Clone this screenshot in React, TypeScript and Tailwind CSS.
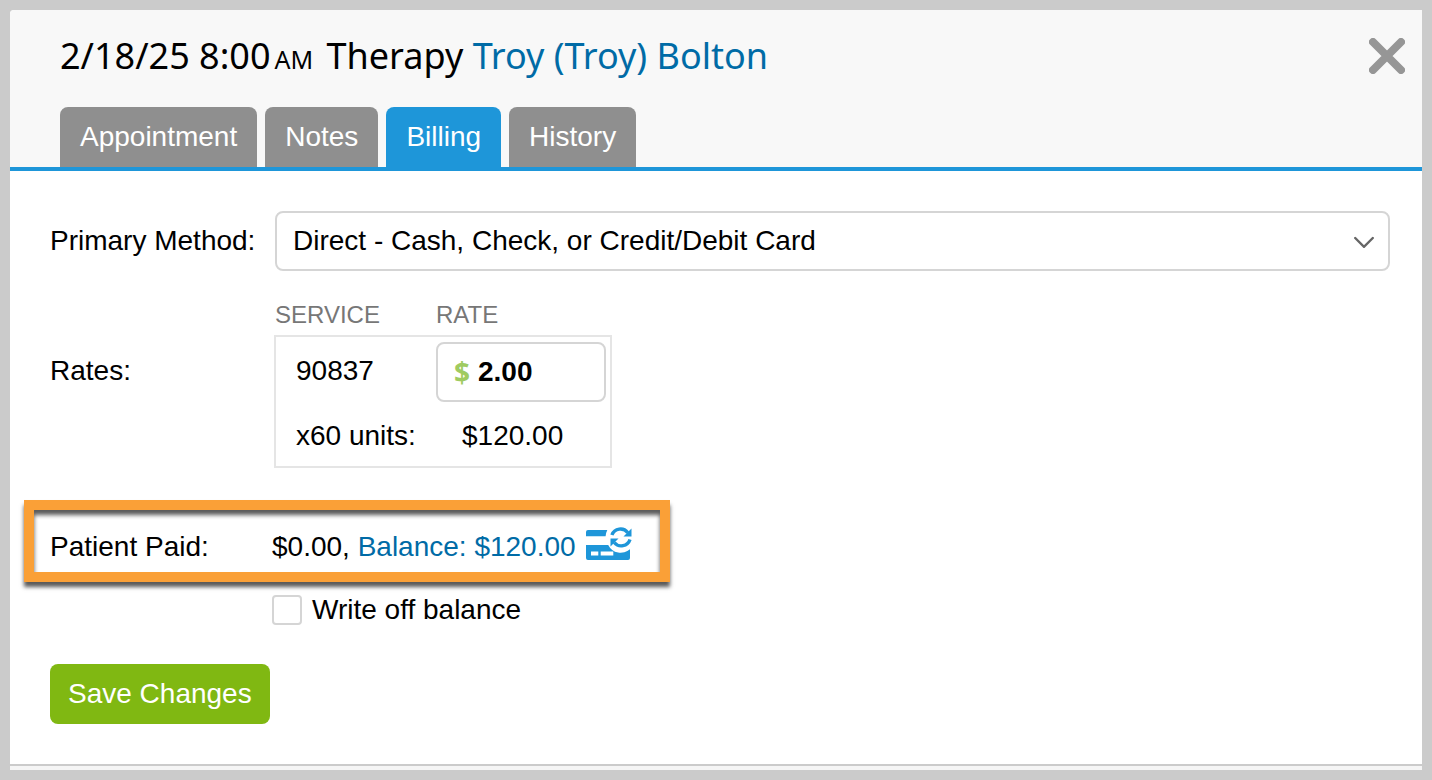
import { useState } from "react";

const TABS = ["Appointment", "Notes", "Billing", "History"];

const TAB_STYLES = "h-[60px] rounded-t-lg px-5 text-white";
const LINK_STYLES = "text-[#006ba6]";
const BORDER_STYLES = "border-2 border-[#d5d5d5]";

const CloseIcon = () => (
  <svg viewBox="0 0 36 36" className="size-9" aria-hidden="true">
    <path
      d="M4 4L32 32M32 4L4 32"
      stroke="#969696"
      strokeWidth="8"
      strokeLinecap="round"
    />
  </svg>
);

const ChevronIcon = () => (
  <svg
    viewBox="0 0 20 12"
    className="pointer-events-none absolute top-[25px] right-4 h-3 w-5"
    aria-hidden="true"
  >
    <path
      d="M1.2 2L10 10.8L18.8 2"
      fill="none"
      stroke="#666666"
      strokeWidth="2.400"
      strokeLinecap="round"
    />
  </svg>
);

const CardRefreshIcon = () => (
  <svg viewBox="0 0 48 36" className="h-9 w-12" aria-hidden="true">
    <g fill="#1e96d9">
      <path d="M3 4H22.3Q20.8 7 20.6 10.3H1V6Q1 4 3 4Z" />
      <path d="M1 19H23.2A14 14 0 0 0 45 23.300V32Q45 34 43 34H3Q1 34 1 32Z" />
      <path d="M46.500 2.500V10.500H38.500Z" />
      <path d="M25.500 20.500V12.500H33.500Z" />
    </g>
    <path d="M6 25.500H13.300V29.500H6ZM15.700 25.500H28.300V29.500H15.700Z" fill="#fff" />
    <path
      d="M26.900 9A9.200 9.200 0 0 1 42.800 6.700M45 13.500A9.200 9.200 0 0 1 29.200 16.500"
      fill="none"
      stroke="#1e96d9"
      strokeWidth="3.400"
    />
  </svg>
);

const App = () => {
  const [activeTab, setActiveTab] = useState("Billing");
  const [rate, setRate] = useState("2.00");

  return (
    <div className="min-h-screen bg-[#cbcbcb] p-2.5 font-['Liberation_Sans',Arial,sans-serif] text-[28px] leading-8 text-black">
      <div className="overflow-hidden rounded-tl-sm bg-white">
        <header className="border-b-4 border-[#1e96d9] bg-[#f8f8f8] pr-[17px] pl-[50px]">
          <div className="flex items-start justify-between pt-5">
            <h1 className="font-['Noto_Sans','Open_Sans',sans-serif] text-[36px] leading-[52px]">
              2/18/25 8:00
              <span className="mx-1 text-[25px] leading-none">AM</span> Therapy{" "}
              <a href="#patient" className={LINK_STYLES}>
                Troy (Troy) Bolton
              </a>
            </h1>
            <button type="button" aria-label="Close" className="mt-2">
              <CloseIcon />
            </button>
          </div>
          <nav className="mt-[25px] flex gap-2">
            {TABS.map((tab) => (
              <button
                key={tab}
                type="button"
                onClick={() => setActiveTab(tab)}
                className={`${TAB_STYLES} ${
                  tab === activeTab ? "bg-[#1e96d9]" : "bg-[#8f8f8f]"
                }`}
              >
                {tab}
              </button>
            ))}
          </nav>
        </header>

        <form className="px-10 pt-10 pr-8 pb-10">
          <div className="flex items-center">
            <label htmlFor="method" className="w-[225px] shrink-0">
              Primary Method:
            </label>
            <div className="relative grow">
              <select
                id="method"
                className={`h-[60px] w-full appearance-none rounded-lg bg-white px-4 ${BORDER_STYLES}`}
              >
                <option>Direct - Cash, Check, or Credit/Debit Card</option>
              </select>
              <ChevronIcon />
            </div>
          </div>

          <div className="mt-7 flex">
            <div className="mt-14 w-[224px] shrink-0">Rates:</div>
            <table className="border-collapse text-left">
              <thead>
                <tr className="text-2xl leading-8 text-[#777777] uppercase">
                  <th className="w-[161px] pb-1 font-normal">Service</th>
                  <th className="pb-1 font-normal">Rate</th>
                </tr>
              </thead>
              <tbody className="border-2 border-[#e5e5e5]">
                <tr>
                  <td className="pl-5">90837</td>
                  <td className="pt-[5px] pr-1 pb-[3px]">
                    <label
                      className={`flex h-[60px] w-[170px] items-center rounded-lg px-4 font-bold ${BORDER_STYLES}`}
                    >
                      <span className="mr-2 font-['Open_Sans',sans-serif] text-[#9fcb61]">
                        $
                      </span>
                      <input
                        type="text"
                        aria-label="Rate"
                        value={rate}
                        onChange={(e) => setRate(e.target.value)}
                        className="w-full min-w-0 outline-none"
                      />
                    </label>
                  </td>
                </tr>
                <tr>
                  <td className="h-[62px] pl-5">x60 units:</td>
                  <td className="pl-[26px]">$120.00</td>
                </tr>
              </tbody>
            </table>
          </div>

          <div className="mt-8 -ml-[26px] flex h-[82px] w-[646px] items-center border-10 border-[#faa037] pt-3 pl-4 shadow-[0px_5px_4px_rgba(0,0,0,0.65),inset_0px_5px_4px_rgba(0,0,0,0.65)]">
            <div className="w-[222px]">Patient Paid:</div>
            <div>
              $0.00,{" "}
              <a href="#balance" className={LINK_STYLES}>
                Balance: $120.00
              </a>
            </div>
            <button
              type="button"
              aria-label="Charge card"
              className="ml-[9px] pb-1.5"
            >
              <CardRefreshIcon />
            </button>
          </div>

          <div className="mt-3 ml-[222px] flex items-center gap-2.5">
            <input
              id="writeOff"
              type="checkbox"
              className={`size-[30px] appearance-none rounded-sm bg-white checked:bg-[#1e96d9] ${BORDER_STYLES}`}
            />
            <label htmlFor="writeOff">Write off balance</label>
          </div>

          <button
            type="button"
            className="mt-[38px] h-[60px] rounded-lg bg-[#80b812] px-[18px] text-white"
          >
            Save Changes
          </button>
        </form>
        <div className="h-1.5 border-t-2 border-[#cbcbcb] bg-[#f5f5f5]" />
      </div>
    </div>
  );
};

export default App;
